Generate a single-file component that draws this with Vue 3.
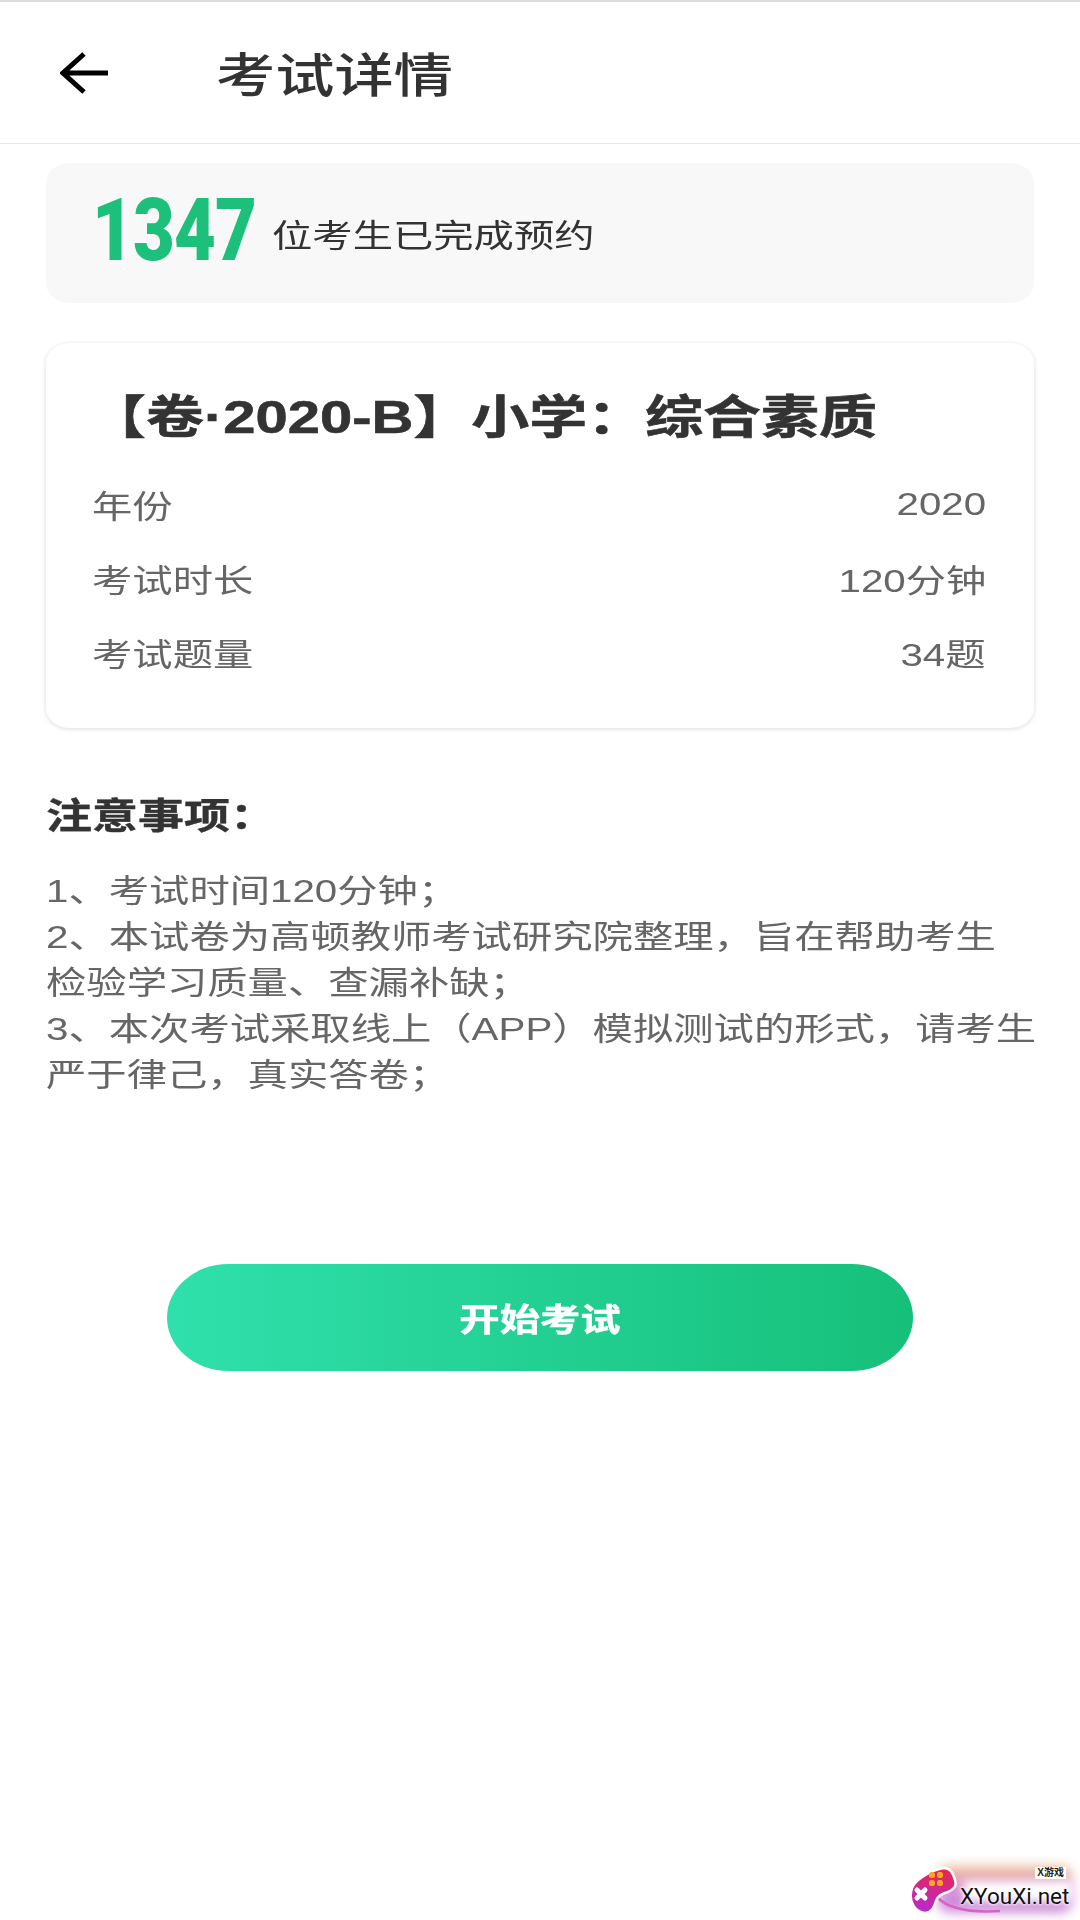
<template>
  <div class="page">
    <header class="nav">
      <svg class="back" viewBox="0 0 48 42" width="48" height="42">
        <path d="M48 21H4M24 2L3 21l21 19" fill="none" stroke="#000" stroke-width="5" />
      </svg>
      <h1 class="nav-title wide">考试详情</h1>
    </header>

    <main class="content">
      <section class="stat">
        <span class="stat-num"><span class="stat-digits">{{ bookedCount }}</span></span>
        <span class="stat-text wide">位考生已完成预约</span>
      </section>

      <section class="card">
        <h2 class="card-title wide">【卷·2020-B】小学：综合素质</h2>
        <div v-for="row in rows" :key="row.label" class="row">
          <span class="wide">{{ row.label }}</span>
          <span class="wide wide-right">{{ row.value }}</span>
        </div>
      </section>

      <h3 class="notice-title wide">注意事项：</h3>
      <div class="notice">
        <p v-for="line in notices" :key="line" class="wide">{{ line }}</p>
      </div>

      <button class="start" type="button"><span class="start-label wide">开始考试</span></button>
    </main>

    <div class="watermark">
      <div class="wm-glow"></div>
      <div class="wm-glow-inner"></div>
      <svg class="wm-logo" viewBox="0 0 120 58" width="120" height="58">
        <defs>
          <linearGradient id="padFill" x1="0.6" y1="0" x2="0.4" y2="1">
            <stop offset="0" stop-color="#e8264f" />
            <stop offset="1" stop-color="#b62bd0" />
          </linearGradient>
        </defs>
        <path d="M30 36c10 10 30 15 62 13" fill="none" stroke="#d563c4" stroke-width="2.5" />
        <path d="M4 26C7 17 24 8 36 6c5 0 9 4 11 12 2 6-1 9-7 12-7 2-10 4-12 9-2 7-6 12-11 12C6 50 0 38 4 26z" fill="url(#padFill)" stroke="#fff" stroke-width="2.5" />
        <g fill="#ffa81e">
          <rect x="21" y="10" width="6" height="6" rx="2.5" />
          <rect x="29" y="10" width="6" height="6" rx="2.5" />
          <rect x="21" y="18" width="6" height="6" rx="2.5" />
          <rect x="29" y="18" width="6" height="6" rx="2.5" />
        </g>
        <path d="M9 28l8 8M17 28l-8 8" stroke="#fff" stroke-width="5" stroke-linecap="round" />
      </svg>
      <span class="wm-tag">X游戏</span>
      <span class="wm-name">XYouXi.net</span>
    </div>
  </div>
</template>

<script setup>
const bookedCount = 1347

const rows = [
  { label: '年份', value: '2020' },
  { label: '考试时长', value: '120分钟' },
  { label: '考试题量', value: '34题' }
]

// 行尾按原图断开
const notices = [
  '1、考试时间120分钟；',
  '2、本试卷为高顿教师考试研究院整理，旨在帮助考生',
  '检验学习质量、查漏补缺；',
  '3、本次考试采取线上（APP）模拟测试的形式，请考生',
  '严于律己，真实答卷；'
]
</script>

<style>
html,
body {
  margin: 0;
  background: #fff;
}
</style>

<style scoped>
.page {
  position: relative;
  width: 1080px;
  height: 1920px;
  overflow: hidden;
  background: #fff;
  border-top: 2px solid #dcdcdc;
  box-sizing: border-box;
  font-family: "Liberation Sans", "Noto Sans CJK SC", sans-serif;
}

/* 原图文字横向被拉宽 */
.wide {
  display: block;
  width: max-content;
  transform: scaleX(1.26);
  transform-origin: left center;
  white-space: nowrap;
}

.wide-right {
  transform-origin: right center;
}

.nav {
  display: flex;
  align-items: center;
  height: 142px;
  padding-left: 60px;
  border-bottom: 1px solid #e8e8e8;
  box-sizing: border-box;
}

.back {
  flex: none;
  margin-right: 108px;
}

.nav-title {
  margin: 0 0 2px;
  font-size: 47px;
  font-weight: 500;
  color: #333;
}

.content {
  display: flex;
  flex-direction: column;
  padding: 19px 46px 0;
}

.stat {
  display: flex;
  align-items: center;
  height: 140px;
  padding-left: 46px;
  border-radius: 24px / 20px;
  background: #f8f8f8;
}

.stat-num {
  flex: none;
  width: 180px;
  margin-top: -6px;
}

.stat-digits {
  display: inline-block;
  font-family: Roboto, "Liberation Sans", sans-serif;
  font-size: 88px;
  line-height: 120px;
  font-weight: 900;
  letter-spacing: -1px;
  color: #1cc07a;
  transform: scaleX(0.82);
  transform-origin: left center;
}

.stat-text {
  font-size: 32px;
  color: #333;
}

.card {
  margin-top: 40px;
  height: 385px;
  padding: 36px 48px 0 46px;
  border-radius: 24px / 20px;
  background: #fff;
  box-shadow: 0 1px 5px rgba(0, 0, 0, 0.14);
  box-sizing: border-box;
}

.card-title {
  margin: 0 0 12px -4px;
  font-size: 46px;
  line-height: 76px;
  font-weight: 700;
  color: #333;
  -webkit-text-stroke: 0.6px #333;
}

.row {
  display: flex;
  justify-content: space-between;
  height: 74px;
  align-items: center;
  font-size: 32px;
  color: #666;
}

.notice-title {
  margin: 64px 0 0;
  font-size: 36.5px;
  line-height: 50px;
  font-weight: 700;
  color: #333;
  -webkit-text-stroke: 0.4px #333;
}

.notice {
  margin-top: 26px;
  font-size: 32px;
  line-height: 46px;
  color: #666;
}

.notice p {
  margin: 0;
}

.start {
  align-self: center;
  margin-top: 166px;
  display: flex;
  justify-content: center;
  align-items: center;
  width: 746px;
  height: 107px;
  border: none;
  border-radius: 62px / 54px;
  background: linear-gradient(90deg, #30e0ac, #16c07a);
  color: #fff;
  font-family: inherit;
  font-size: 32px;
  font-weight: 700;
}

.start-label {
  position: relative;
  top: -1px;
  transform-origin: center;
  -webkit-text-stroke: 0.5px #fff;
}

.watermark {
  position: absolute;
  right: 0;
  bottom: 0;
  width: 172px;
  height: 58px;
}

.wm-glow {
  position: absolute;
  left: 30px;
  top: 4px;
  width: 134px;
  height: 46px;
  border-radius: 10px;
  background: linear-gradient(180deg, #f0c090, #d894e0 55%, #c67fd2);
  filter: blur(6px);
}

.wm-glow-inner {
  position: absolute;
  left: 56px;
  top: 19px;
  width: 108px;
  height: 20px;
  background: #fff;
  filter: blur(5px);
}

.wm-logo {
  position: absolute;
  left: 0;
  top: 0;
}

.wm-tag {
  position: absolute;
  right: 14px;
  top: 5px;
  font-size: 10px;
  line-height: 12px;
  font-weight: 700;
  color: #222;
  background: #fff;
  padding: 0 2px;
}

.wm-name {
  position: absolute;
  left: 52px;
  top: 22px;
  font-family: Roboto, "Liberation Sans", sans-serif;
  font-size: 22.5px;
  line-height: 24px;
  color: #111;
  text-shadow: 0 0 3px #fff, 0 0 3px #fff;
}
</style>
